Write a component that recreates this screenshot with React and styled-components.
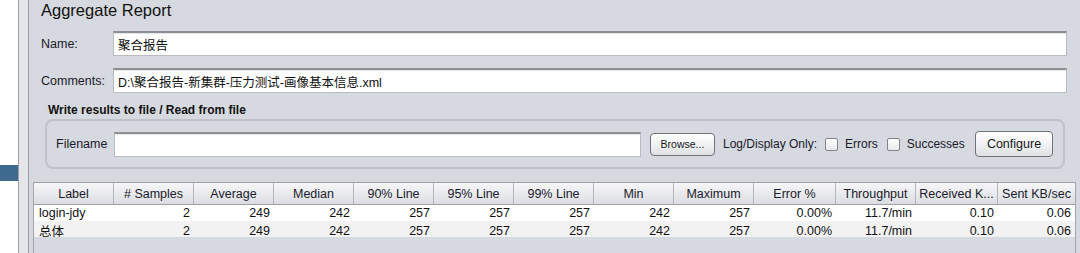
import React from 'react';
import styled, { createGlobalStyle } from 'styled-components';

const GlobalStyle = createGlobalStyle`
  html, body {
    margin: 0;
    padding: 0;
    width: 1080px;
    height: 253px;
    overflow: hidden;
    background: #ffffff;
  }
  body {
    font-family: 'Liberation Sans', 'Noto Sans CJK SC', sans-serif;
    font-size: 12px;
    color: #1c1c1c;
  }
`;

const COLUMNS = [
  { title: 'Label', width: 80, key: 'label', align: 'left' },
  { title: '# Samples', width: 80, key: 'samples' },
  { title: 'Average', width: 80, key: 'avg' },
  { title: 'Median', width: 80, key: 'median' },
  { title: '90% Line', width: 80, key: 'p90' },
  { title: '95% Line', width: 80, key: 'p95' },
  { title: '99% Line', width: 80, key: 'p99' },
  { title: 'Min', width: 80, key: 'min' },
  { title: 'Maximum', width: 80, key: 'max' },
  { title: 'Error %', width: 82, key: 'err' },
  { title: 'Throughput', width: 80, key: 'tput' },
  { title: 'Received K...', width: 82, key: 'recv' },
  { title: 'Sent KB/sec', width: 77, key: 'sent' },
];

const ROWS = [
  { label: 'login-jdy', samples: 2, avg: 249, median: 242, p90: 257, p95: 257, p99: 257, min: 242, max: 257, err: '0.00%', tput: '11.7/min', recv: '0.10', sent: '0.06' },
  { label: '总体', samples: 2, avg: 249, median: 242, p90: 257, p95: 257, p99: 257, min: 242, max: 257, err: '0.00%', tput: '11.7/min', recv: '0.10', sent: '0.06' },
];

const gridTemplate = COLUMNS.map((c) => `${c.width}px`).join(' ');

export default function App() {
  return (
    <>
      <GlobalStyle />
      <Window>
        <TreePane>
          <Selected />
        </TreePane>
        <Divider />
        <Main>
          <Title>Aggregate Report</Title>
          <FormRow>
            <FieldLabel>Name:</FieldLabel>
            <TextField>聚合报告</TextField>
          </FormRow>
          <FormRow>
            <FieldLabel>Comments:</FieldLabel>
            <TextField>D:\聚合报告-新集群-压力测试-画像基本信息.xml</TextField>
          </FormRow>
          <GroupTitle>Write results to file / Read from file</GroupTitle>
          <GroupBox>
            <FileLabel>Filename</FileLabel>
            <FileField />
            <Button $small>Browse...</Button>
            <Caption>Log/Display Only:</Caption>
            <Check>
              <Box />
              <span>Errors</span>
            </Check>
            <Check>
              <Box />
              <span>Successes</span>
            </Check>
            <Button $end>Configure</Button>
          </GroupBox>
          <Table>
            <HeaderRow>
              {COLUMNS.map((c) => (
                <HeaderCell key={c.key}>{c.title}</HeaderCell>
              ))}
            </HeaderRow>
            {ROWS.map((r, i) => (
              <BodyRow key={i} $alt={i % 2 === 1}>
                {COLUMNS.map((c) => (
                  <Cell key={c.key} $align={c.align}>
                    {r[c.key]}
                  </Cell>
                ))}
              </BodyRow>
            ))}
          </Table>
        </Main>
      </Window>
    </>
  );
}

const Window = styled.div`
  display: flex;
  width: 1080px;
  height: 253px;
`;

const TreePane = styled.div`
  width: 18px;
  background: #ffffff;
  padding-top: 165px;
  box-sizing: border-box;
`;

const Selected = styled.div`
  height: 16px;
  background: #3e6a8d;
`;

const Divider = styled.div`
  width: 11px;
  box-sizing: border-box;
  background: #e3e5e9;
  border-left: 1px solid #9c9ea3;
  border-right: 1px solid #9c9ea3;
`;

const Main = styled.div`
  flex: 1;
  background: #d6d9df;
  display: flex;
  flex-direction: column;
  padding: 0 4px;
  min-width: 0;
`;

const Title = styled.div`
  font-size: 16.5px;
  line-height: 20px;
  height: 20px;
  padding-left: 8px;
  color: #111;
`;

const FormRow = styled.div`
  display: flex;
  align-items: center;
  height: 25px;
  margin-top: 11px;
  padding-left: 8px;
  padding-right: 9px;
  &:nth-of-type(3) {
    margin-top: 12px;
  }
`;

const FieldLabel = styled.div`
  width: 72px;
  font-size: 12.5px;
  color: #1a1a2a;
`;

const TextField = styled.div`
  flex: 1;
  height: 25px;
  box-sizing: border-box;
  background: #ffffff;
  border: 1px solid #b9bbbf;
  border-top: 2px solid #8d8f93;
  box-shadow: inset 0 1px 0 #e4e5e7;
  padding: 0 4px;
  display: flex;
  align-items: center;
  font-size: 12.5px;
  color: #101010;
  white-space: nowrap;
`;

const GroupTitle = styled.div`
  font-weight: bold;
  font-size: 12px;
  line-height: 14px;
  margin-top: 10px;
  padding-left: 15px;
  color: #111;
`;

const GroupBox = styled.div`
  display: flex;
  align-items: center;
  height: 50px;
  box-sizing: border-box;
  margin: 2px 11px 0 12px;
  padding: 0 10px 0 9px;
  border: 2px solid #bfc2c8;
  border-radius: 8px;
`;

const FileLabel = styled.div`
  width: 58px;
  font-size: 12.5px;
  color: #1a1a2a;
`;

const FileField = styled(TextField)`
  flex: 0 0 527px;
  margin-right: 9px;
`;

const Button = styled.div`
  height: ${(p) => (p.$small ? '23px' : '26px')};
  width: ${(p) => (p.$small ? '65px' : '78px')};
  box-sizing: border-box;
  border: 1px solid #6f7276;
  border-radius: 4px;
  background: linear-gradient(#ffffff, #f1f2f4 50%, #dfe0e3);
  display: flex;
  align-items: center;
  justify-content: center;
  font-size: ${(p) => (p.$small ? '10.5px' : '12.5px')};
  color: #161616;
  margin-right: ${(p) => (p.$end ? '0' : '8px')};
  margin-left: ${(p) => (p.$end ? 'auto' : '0')};
`;

const Caption = styled.div`
  font-size: 12px;
  color: #1a1a2a;
  margin-right: 8px;
`;

const Check = styled.div`
  display: flex;
  align-items: center;
  gap: 7px;
  margin-right: 9px;
  font-size: 12px;
  color: #1a1a2a;
`;

const Box = styled.div`
  width: 13px;
  height: 13px;
  box-sizing: border-box;
  border: 1px solid #808388;
  border-radius: 2px;
  background: linear-gradient(#ffffff, #e8e9ec);
`;

const Table = styled.div`
  flex: 1;
  margin-top: 13px;
  border-left: 1px solid #a3a5aa;
  border-right: 1px solid #a3a5aa;
  display: flex;
  flex-direction: column;
`;

const HeaderRow = styled.div`
  display: grid;
  grid-template-columns: ${gridTemplate};
  height: 23px;
  box-sizing: border-box;
  border-top: 1px solid #9ea0a5;
  border-bottom: 1px solid #9ea0a5;
  background: linear-gradient(#f6f6f8, #e9eaed 50%, #dcdde1);
`;

const HeaderCell = styled.div`
  display: flex;
  align-items: center;
  justify-content: center;
  border-right: 1px solid #b3b5ba;
  font-size: 12.5px;
  color: #1a1a2a;
  white-space: nowrap;
  overflow: hidden;
  &:last-child {
    border-right: none;
  }
`;

const BodyRow = styled.div`
  display: grid;
  grid-template-columns: ${gridTemplate};
  height: 16px;
  background: ${(p) => (p.$alt ? '#f2f2f2' : '#ffffff')};
`;

const Cell = styled.div`
  display: flex;
  align-items: center;
  justify-content: ${(p) => (p.$align === 'left' ? 'flex-start' : 'flex-end')};
  padding: ${(p) => (p.$align === 'left' ? '0 0 0 5px' : '0 4px 0 0')};
  font-size: 12.5px;
  color: #111;
  white-space: nowrap;
`;
